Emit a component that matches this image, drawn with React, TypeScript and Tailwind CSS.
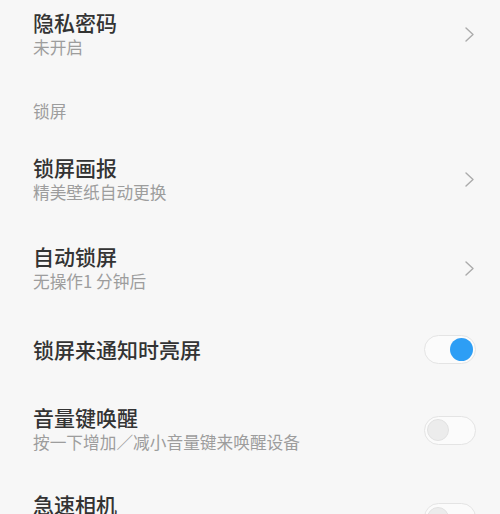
import type { ReactNode } from "react";

const font = { fontFamily: '"Noto Sans CJK SC", "Noto Sans", sans-serif' };

function Chevron() {
  return (
    <svg width="11" height="17" viewBox="0 0 11 17" fill="none">
      <path d="M2 2 L9 8.5 L2 15" stroke="#ababab" strokeWidth="1.4" strokeLinecap="round" strokeLinejoin="round" />
    </svg>
  );
}

function Toggle({ on }: { on: boolean }) {
  return (
    <div
      className={`flex h-[29px] w-[52px] items-center rounded-full border border-[#e4e4e4] bg-[#fbfbfb] px-[2px] ${
        on ? "justify-end" : "justify-start"
      }`}
    >
      {on ? (
        <div className="h-[23px] w-[23px] rounded-full bg-[#2d9ef5]" />
      ) : (
        <div className="h-[22px] w-[22px] rounded-full border border-[#e2e2e2] bg-[#ececec]" />
      )}
    </div>
  );
}

function Row({
  title,
  sub,
  h,
  right
}: {
  title: string;
  sub?: string;
  h: string;
  right: ReactNode;
}) {
  return (
    <div className={`flex items-center justify-between pl-[33px] ${h}`}>
      <div className="flex flex-col">
        <span className="text-[21px] font-medium leading-[25px] text-[#333333]">{title}</span>
        {sub ? <span className="text-[16.7px] leading-[25px] text-[#9d9d9d]">{sub}</span> : null}
      </div>
      {right}
    </div>
  );
}

export default function App() {
  return (
    <div className="h-[514px] w-[500px] overflow-hidden bg-[#f7f7f7]" style={font}>
      <Row title="隐私密码" sub="未开启" h="h-[69px] pr-[25px]" right={<Chevron />} />
      <div className="pl-[33px] pt-[32px] pb-[14px] text-[16.7px] leading-[20px] text-[#9d9d9d]">锁屏</div>
      <Row title="锁屏画报" sub="精美壁纸自动更换" h="h-[89px] pr-[25px]" right={<Chevron />} />
      <Row title="自动锁屏" sub="无操作1 分钟后" h="h-[89px] pr-[25px]" right={<Chevron />} />
      <Row title="锁屏来通知时亮屏" h="h-[72px] pr-[24px]" right={<Toggle on />} />
      <Row title="音量键唤醒" sub="按一下增加／减小音量键来唤醒设备" h="h-[90px] pr-[24px]" right={<Toggle on={false} />} />
      <div className="flex items-start justify-between pl-[33px] pr-[24px] pt-[17px]">
        <span className="text-[21px] font-medium leading-[25px] text-[#333333]">急速相机</span>
        <div className="mt-[11px]">
          <Toggle on={false} />
        </div>
      </div>
    </div>
  );
}
